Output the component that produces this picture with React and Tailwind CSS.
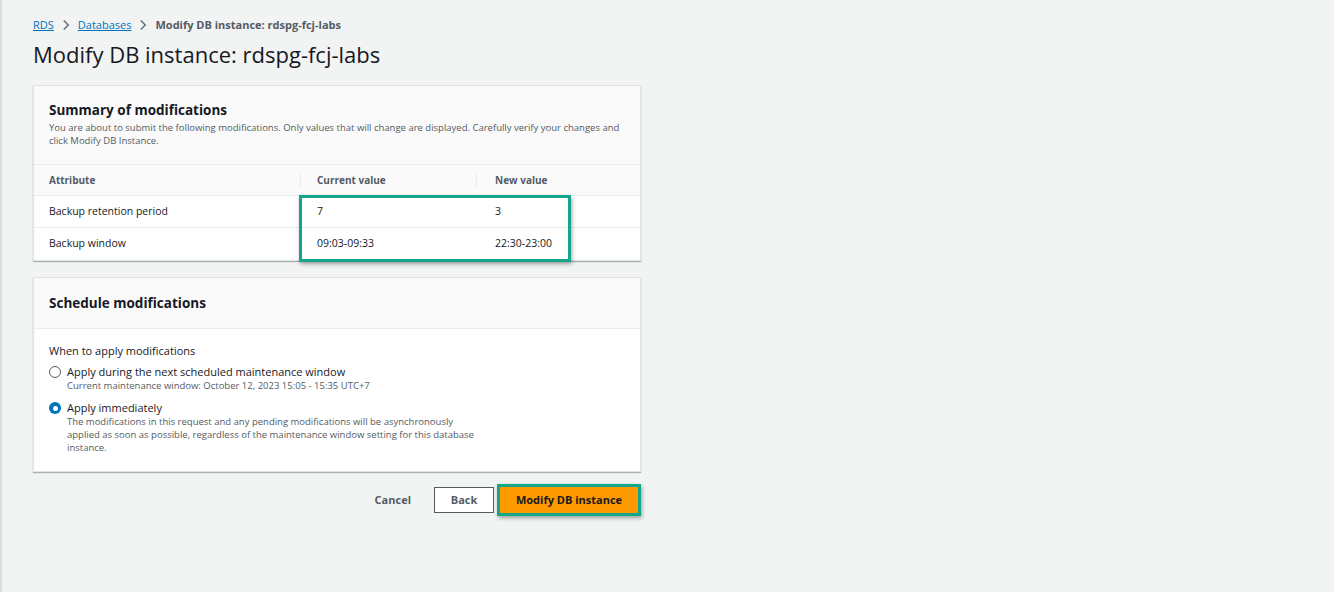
import React from "react";

function Chevron() {
  return (
    <svg width="12" height="12" viewBox="0 0 16 16" className="mx-[6px] text-[#687078]">
      <path d="M5 2l6 6-6 6" fill="none" stroke="currentColor" strokeWidth="2" />
    </svg>
  );
}

function Radio({ checked }) {
  return checked ? (
    <span className="mt-[2px] flex h-[12px] w-[12px] shrink-0 items-center justify-center rounded-full bg-[#0073bb]">
      <span className="h-[5px] w-[5px] rounded-full bg-white" />
    </span>
  ) : (
    <span className="mt-[2px] h-[12px] w-[12px] shrink-0 rounded-full border border-[#545b64] bg-white" />
  );
}

const rows = [
  ["Backup retention period", "7", "3"],
  ["Backup window", "09:03-09:33", "22:30-23:00"],
];

export default function App() {
  return (
    <div
      className="min-h-[592px] border-l-2 border-[#dcdede] bg-[#f2f3f3] text-[#16191f]"
      style={{ fontFamily: "'Open Sans', 'Noto Sans', sans-serif" }}
    >
      <div className="w-[639px] pl-[31px] pt-[17px]">
        <nav className="flex items-center text-[11px] leading-[16px]">
          <a className="text-[#0073bb] underline">RDS</a>
          <Chevron />
          <a className="text-[#0073bb] underline">Databases</a>
          <Chevron />
          <span className="font-bold text-[#545b64]">Modify DB instance: rdspg-fcj-labs</span>
        </nav>
        <h1 className="mt-[6px] text-[22px] leading-[30px] text-[#16191f]">
          Modify DB instance: rdspg-fcj-labs
        </h1>

        <section className="mt-[16px] border border-[#e1e4e4] bg-white shadow-[0_1px_1px_rgba(0,28,36,0.3)]">
          <div className="border-b border-[#eaeded] bg-[#fafafa] px-[15px] pb-[17px] pt-[15px]">
            <h2 className="text-[13.5px] font-bold leading-[18px]">Summary of modifications</h2>
            <p className="mt-[2px] text-[9.5px] leading-[13px] text-[#545b64]">
              You are about to submit the following modifications. Only values that will change are displayed. Carefully verify your changes and click Modify DB Instance.
            </p>
          </div>
          <div className="relative">
            <div className="grid h-[31px] grid-cols-[266px_176px_1fr] items-center border-b border-[#eaeded] bg-[#fafafa] text-[10px] font-bold text-[#545b64]">
              <div className="pl-[15px]">Attribute</div>
              <div className="border-l border-[#eaeded] pl-[16px]">Current value</div>
              <div className="border-l border-[#eaeded] pl-[18px]">New value</div>
            </div>
            {rows.map((r, i) => (
              <div
                key={r[0]}
                className={`grid h-[32px] grid-cols-[266px_176px_1fr] items-center text-[10.5px] text-[#16191f] ${i === 0 ? "border-b border-[#eaeded]" : ""}`}
              >
                <div className="pl-[15px]">{r[0]}</div>
                <div className="pl-[17px]">{r[1]}</div>
                <div className="pl-[19px]">{r[2]}</div>
              </div>
            ))}
            <div className="pointer-events-none absolute left-[265px] top-[30px] h-[67px] w-[272px] border-[3px] border-[#14a68a] shadow-[1px_2px_4px_rgba(0,0,0,0.35)]" />
          </div>
        </section>

        <section className="mt-[16px] border border-[#e1e4e4] bg-white shadow-[0_1px_1px_rgba(0,28,36,0.3)]">
          <div className="border-b border-[#eaeded] bg-[#fafafa] px-[15px] py-[15px]">
            <h2 className="text-[13.5px] font-bold leading-[20px]">Schedule modifications</h2>
          </div>
          <div className="px-[15px] pb-[17px] pt-[14px]">
            <div className="text-[11px] leading-[15px]">When to apply modifications</div>
            <div className="mt-[6px] flex gap-[6px]">
              <Radio />
              <div>
                <div className="text-[11px] leading-[15px]">Apply during the next scheduled maintenance window</div>
                <div className="text-[9.5px] leading-[13px] text-[#545b64]">
                  Current maintenance window: October 12, 2023 15:05 - 15:35 UTC+7
                </div>
              </div>
            </div>
            <div className="mt-[8px] flex gap-[6px]">
              <Radio checked />
              <div>
                <div className="text-[11px] leading-[15px]">Apply immediately</div>
                <div className="w-[412px] text-[9.5px] leading-[13px] text-[#545b64]">
                  The modifications in this request and any pending modifications will be asynchronously applied as soon as possible, regardless of the maintenance window setting for this database instance.
                </div>
              </div>
            </div>
          </div>
        </section>

        <div className="mt-[12px] flex items-center justify-end text-[11px] font-bold">
          <button className="mr-[23px] text-[#545b64]">Cancel</button>
          <button className="mr-[3px] h-[26px] w-[60px] border border-[#545b64] bg-white text-[#545b64]">Back</button>
          <div className="border-[3px] border-[#14a68a] shadow-[1px_2px_4px_rgba(0,0,0,0.35)]">
            <button className="h-[26px] w-[138px] bg-[#ff9900] text-[#16191f]">Modify DB instance</button>
          </div>
        </div>
      </div>
    </div>
  );
}
